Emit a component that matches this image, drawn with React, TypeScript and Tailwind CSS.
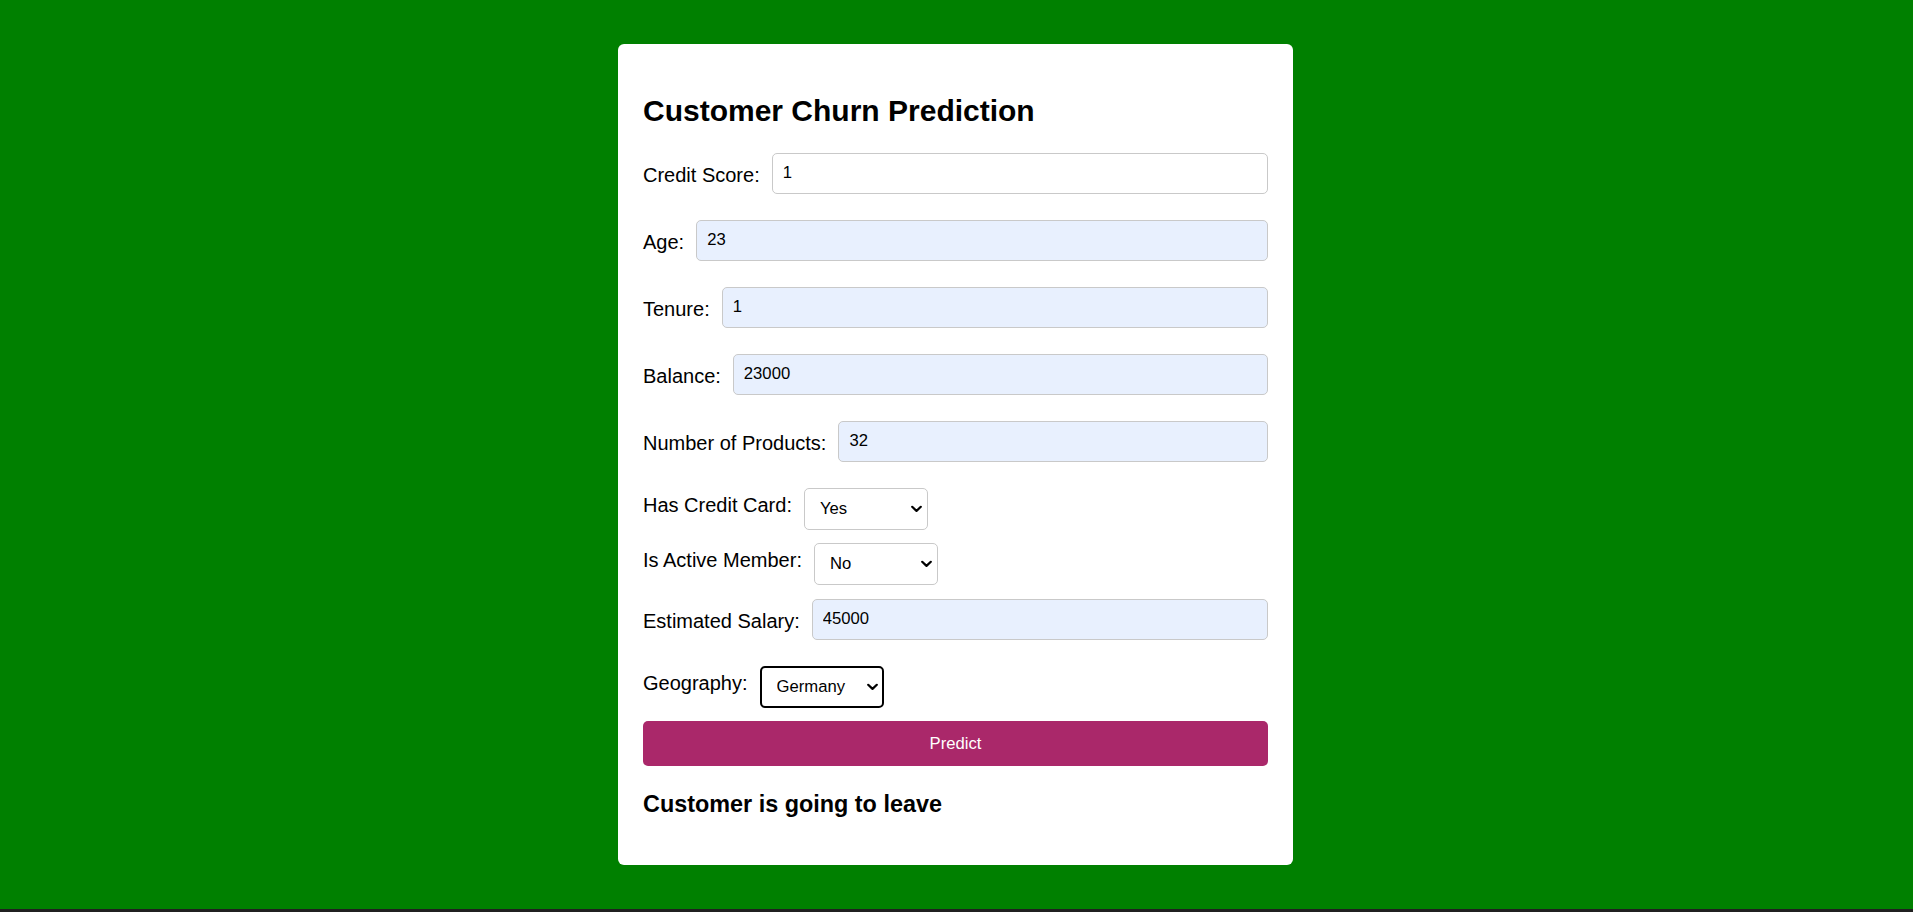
import React from 'react';

const font = "font-['Liberation_Sans',Arial,sans-serif]";

interface FieldProps {
  label: string;
  value: string;
  autofilled?: boolean;
}

// text input row: label on the left, input fills the rest
function TextField({ label, value, autofilled = true }: FieldProps) {
  return (
    <div className="mb-[26px] flex items-start gap-[12px]">
      <label className="mt-[11.5px] shrink-0 text-[20px] leading-[23px] text-black">{label}</label>
      <input
        type="text"
        value={value}
        readOnly
        className={`h-[41px] min-w-0 flex-1 rounded-[5px] border border-[#c9c9c9] px-[10px] text-[16.67px] leading-[19px] text-black outline-none ${
          autofilled ? 'bg-[#e8f0fe]' : 'bg-white'
        }`}
      />
    </div>
  );
}

interface SelectProps {
  label: string;
  value: string;
  options: string[];
  focused?: boolean;
  className?: string;
}

function Chevron() {
  return (
    <svg
      width="11"
      height="7"
      viewBox="0 0 11 7"
      className="pointer-events-none absolute right-[6px] top-1/2 -translate-y-1/2"
    >
      <path d="M1.2 1.2 5.5 5.4 9.8 1.2" fill="none" stroke="#000" strokeWidth="2.2" strokeLinecap="round" strokeLinejoin="round" />
    </svg>
  );
}

function SelectField({ label, value, options, focused = false, className = '' }: SelectProps) {
  return (
    <div className={`flex items-start gap-[12px] ${className}`}>
      <label className="mt-[6px] shrink-0 text-[20px] leading-[23px] text-black">{label}</label>
      <div className="relative h-[42px] w-[124px]">
        <select
          value={value}
          onChange={() => {}}
          className={`h-full w-full appearance-none rounded-[5px] bg-white pl-[15px] text-[16.67px] leading-[19px] text-black outline-none ${
            focused ? 'border-2 border-black pl-[14px]' : 'border border-[#c9c9c9]'
          }`}
        >
          {options.map((o) => (
            <option key={o}>{o}</option>
          ))}
        </select>
        <Chevron />
      </div>
    </div>
  );
}

export default function App() {
  return (
    <div className={`flex min-h-[912px] flex-col ${font}`}>
      <div className="flex h-[909px] items-start justify-center bg-[#008000] pr-[2px] pt-[44px]">
        <div className="w-[675px] rounded-[6px] bg-white p-[25px]">
          <h2 className="mb-[24px] mt-[25px] text-[30px] font-bold leading-[34.5px] text-black">
            Customer Churn Prediction
          </h2>

          <form onSubmit={(e) => e.preventDefault()}>
            <TextField label="Credit Score:" value="1" autofilled={false} />
            <TextField label="Age:" value="23" />
            <TextField label="Tenure:" value="1" />
            <TextField label="Balance:" value="23000" />
            <TextField label="Number of Products:" value="32" />

            <SelectField label="Has Credit Card:" value="Yes" options={['Yes', 'No']} className="mb-[13px]" />
            <SelectField label="Is Active Member:" value="No" options={['Yes', 'No']} className="mb-[14px]" />

            <TextField label="Estimated Salary:" value="45000" />

            <SelectField
              label="Geography:"
              value="Germany"
              options={['France', 'Germany', 'Spain']}
              focused
              className="mb-[13px]"
            />

            <button
              type="submit"
              className="block h-[45px] w-full rounded-[5px] bg-[#aa286a] text-[16.67px] leading-[19px] text-white"
            >
              Predict
            </button>
          </form>

          <h3 className="mb-[22px] mt-[25px] text-[23.4px] font-bold leading-[27px] text-black">
            Customer is going to leave
          </h3>
        </div>
      </div>
      <div className="h-[3px] bg-[#202020]" />
    </div>
  );
}
